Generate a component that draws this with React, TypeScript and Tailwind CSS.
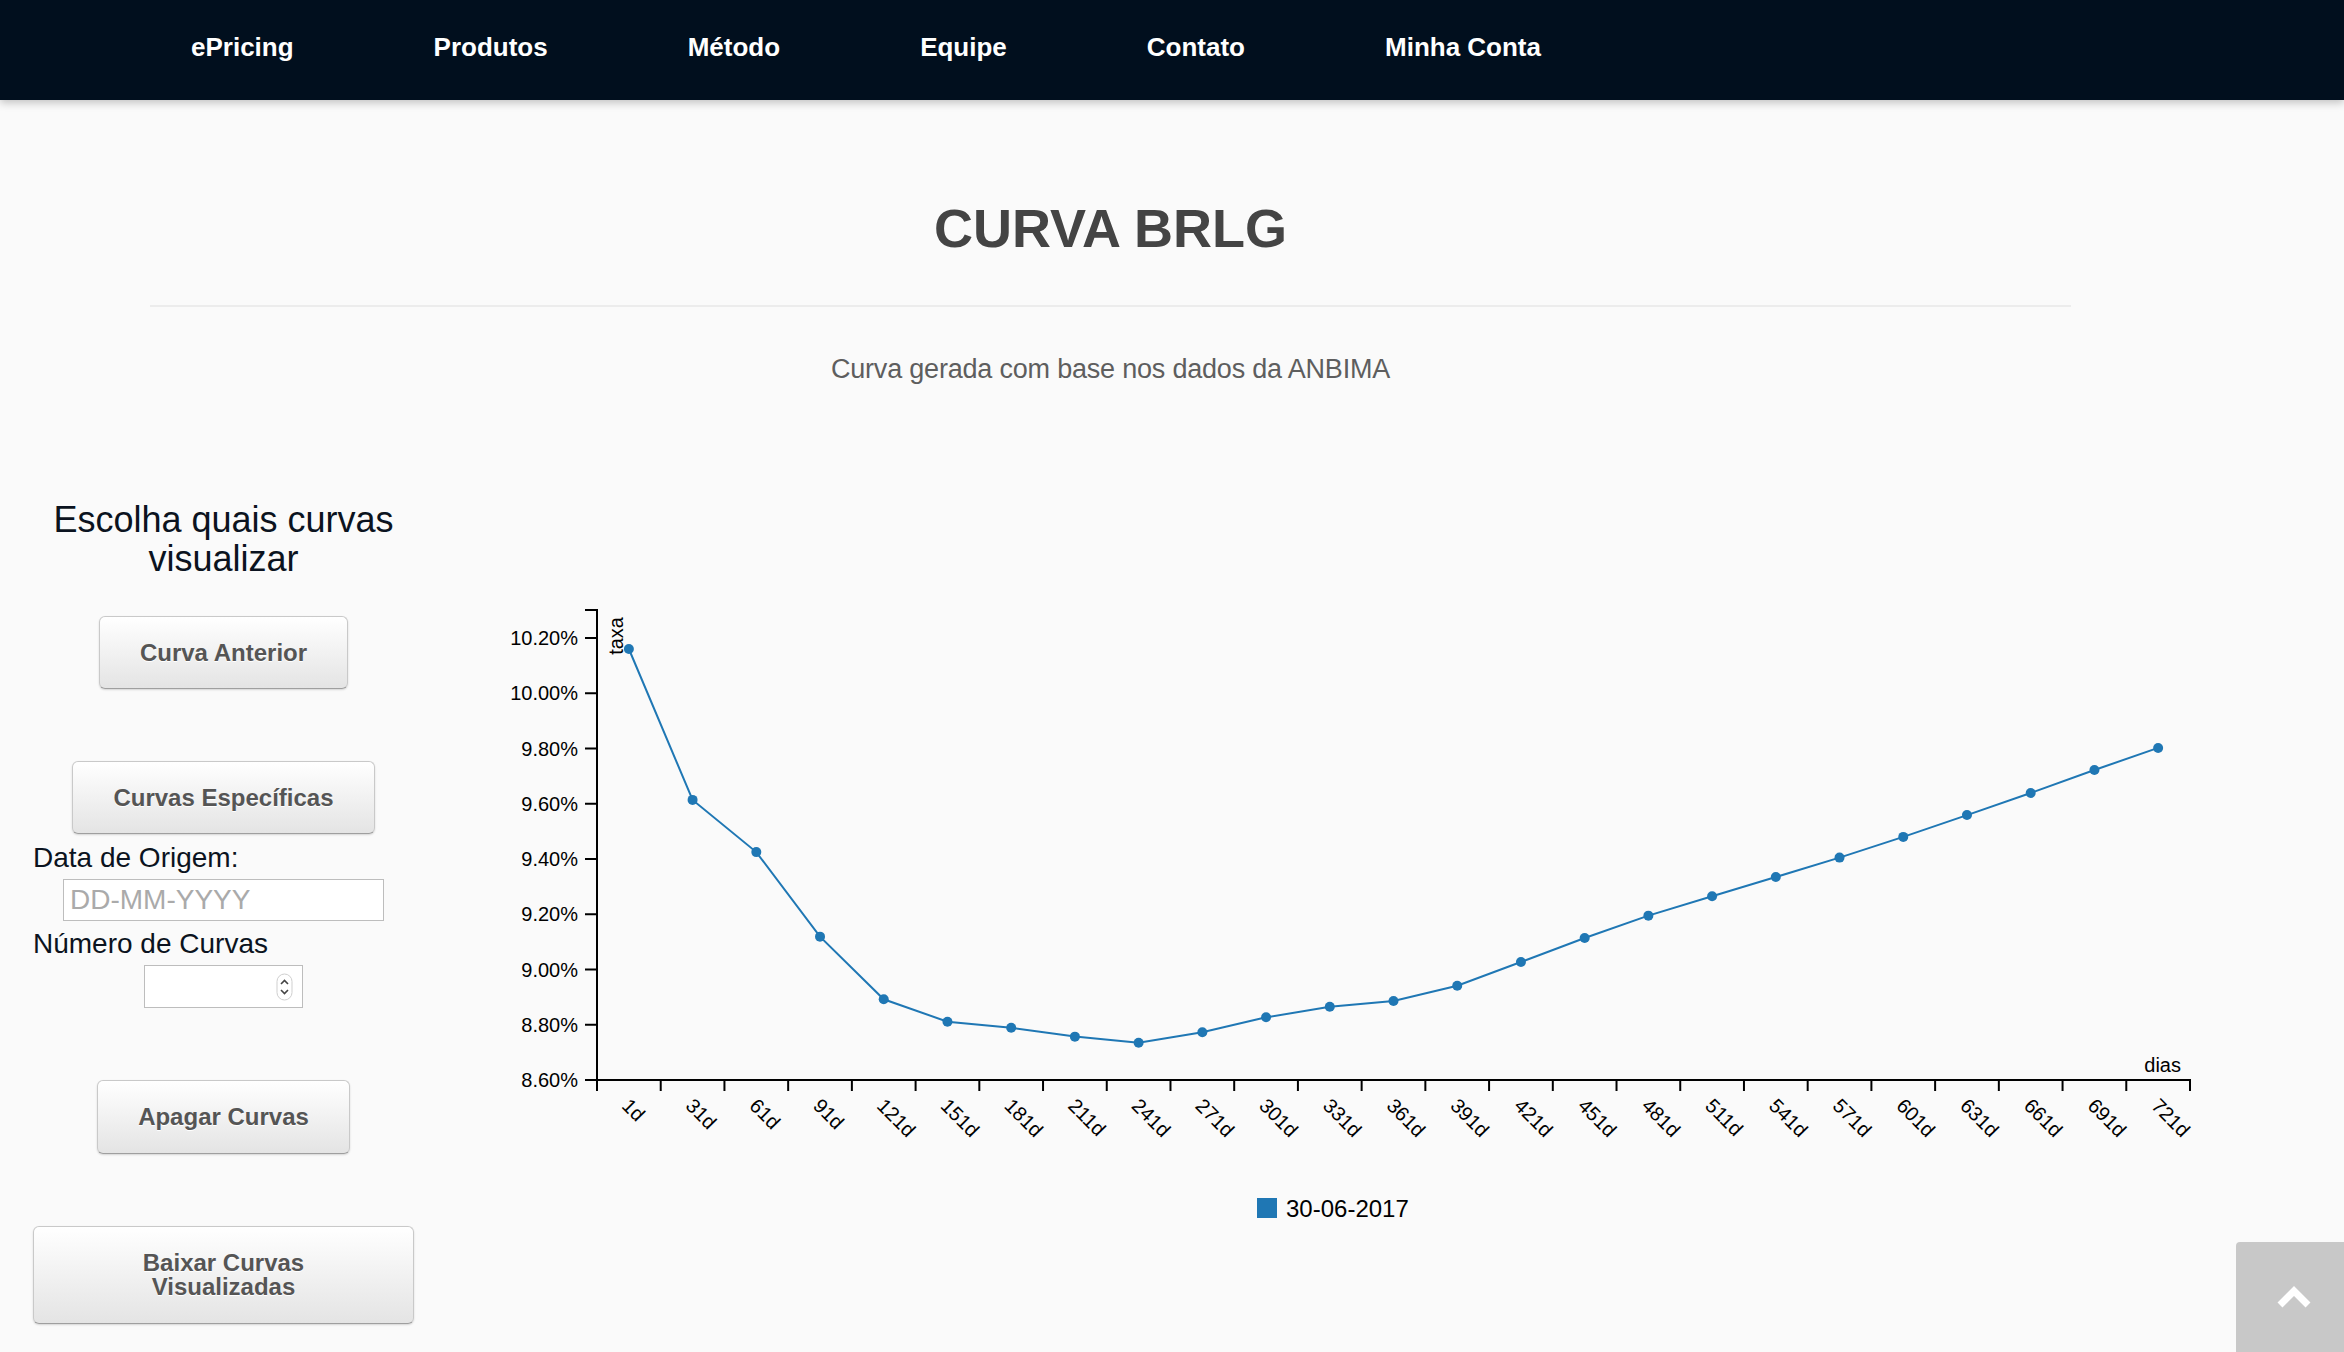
import React from "react";

const navItems = ["ePricing", "Produtos", "Método", "Equipe", "Contato", "Minha Conta"];

// taxa (%) por vencimento, 1d .. 721d
const rates = [
  10.16, 9.614, 9.425, 9.119, 8.892, 8.811, 8.789, 8.757, 8.735, 8.773, 8.827, 8.865, 8.886,
  8.941, 9.027, 9.114, 9.195, 9.265, 9.335, 9.405, 9.48, 9.559, 9.639, 9.722, 9.802,
];

const X0 = 597;
const X1 = 2190;
const Y0 = 1081;
const bw = (X1 - X0) / rates.length;
const yOf = (v: number) => Y0 - (v - 8.6) * 276.25;
const yTicks = [8.6, 8.8, 9.0, 9.2, 9.4, 9.6, 9.8, 10.0, 10.2];

const btn =
  "flex items-center justify-center rounded-[6px] border border-[#c9c9c9] border-b-[#9f9f9f] bg-gradient-to-b from-white to-[#e4e4e4] px-[40px] text-[24px] font-bold leading-[24px] text-[#555] shadow-[0_1px_2px_rgba(0,0,0,0.15)] [text-shadow:0_1px_0_#fff]";

const Chart = () => {
  const pts = rates.map((r, i) => [X0 + (i + 0.5) * bw, yOf(r)]);
  const line = pts.map((p, i) => `${i ? "L" : "M"}${p[0].toFixed(1)},${p[1].toFixed(1)}`).join("");

  return (
    <svg
      viewBox="440 590 1800 680"
      width={1800}
      height={680}
      className="ml-[26px] mt-[89px] shrink-0"
      fontFamily="'Liberation Sans', Arial, sans-serif"
    >
      {/* eixo y */}
      <path d={`M${X0 - 12},611H${X0}V${Y0}H${X0 - 12}`} fill="none" stroke="#000" strokeWidth={2} />
      {yTicks.map((v) => (
        <g key={v}>
          <line x1={X0 - 12} x2={X0} y1={yOf(v)} y2={yOf(v)} stroke="#000" strokeWidth={2} />
          <text x={578} y={yOf(v) + 7} textAnchor="end" fontSize={20} fill="#000">
            {v.toFixed(2)}%
          </text>
        </g>
      ))}
      <text x={623} y={618} textAnchor="end" fontSize={20} transform="rotate(-90 623 618)" fill="#000">
        taxa
      </text>

      {/* eixo x */}
      <path d={`M${X0},${Y0 + 11}V${Y0}H${X1}V${Y0 + 11}`} fill="none" stroke="#000" strokeWidth={2} />
      {rates.map((_, i) =>
        i > 0 ? (
          <line key={i} x1={X0 + i * bw} x2={X0 + i * bw} y1={Y0} y2={Y0 + 11} stroke="#000" strokeWidth={2} />
        ) : null
      )}
      {rates.map((_, i) => {
        const x = X0 + (i + 0.5) * bw - 8;
        return (
          <text key={i} x={x} y={1108} fontSize={20} fill="#000" transform={`rotate(45 ${x} 1108)`}>
            {1 + i * 30}d
          </text>
        );
      })}
      <text x={2181} y={1073} textAnchor="end" fontSize={20} fill="#000">
        dias
      </text>

      {/* curva */}
      <path d={line} fill="none" stroke="#1f77b4" strokeWidth={2} />
      {pts.map((p, i) => (
        <circle key={i} cx={p[0]} cy={p[1]} r={5} fill="#1f77b4" />
      ))}

      {/* legenda */}
      <rect x={1257} y={1199} width={20} height={20} fill="#1f77b4" />
      <text x={1286} y={1218} fontSize={24} fill="#000">
        30-06-2017
      </text>
    </svg>
  );
};

export default function App() {
  return (
    <div className="min-h-screen overflow-hidden bg-[#fafafa] font-['Liberation_Sans',Arial,sans-serif]">
      <nav className="relative z-10 h-[100px] bg-[#010f1e] shadow-[0_3px_8px_rgba(0,0,0,0.22)]">
        <ul className="flex pl-[121px] pt-[33px]">
          {navItems.map((item) => (
            <li key={item} className="px-[70px] text-[26px] font-bold leading-[28px] text-white">
              {item}
            </li>
          ))}
        </ul>
      </nav>

      <div className="ml-[150px] w-[1921px]">
        <h1 className="mt-[101px] text-center text-[54px] font-bold leading-none text-[#444]">CURVA BRLG</h1>
        <div className="mt-[50px] h-[2px] bg-[#ececec]" />
        <p className="mt-[49px] text-center text-[27px] leading-none tracking-[-0.2px] text-[#5e5e5e]">
          Curva gerada com base nos dados da ANBIMA
        </p>
      </div>

      <div className="mt-[117px] flex items-start pl-[33px]">
        <aside className="flex w-[381px] shrink-0 flex-col items-center">
          <h3 className="text-center text-[36px] leading-[39px] text-[#0b1320]">
            Escolha quais curvas
            <br />
            visualizar
          </h3>

          <button className={`${btn} mt-[38px] h-[73px]`}>Curva Anterior</button>
          <button className={`${btn} mt-[72px] h-[73px]`}>Curvas Específicas</button>

          <label className="mt-[8px] self-start text-[28px] leading-[32px] text-[#0b1320]">Data de Origem:</label>
          <input
            placeholder="DD-MM-YYYY"
            className="mt-[5px] h-[42px] w-[321px] border border-[#bdbdbd] bg-white px-[6px] text-[28px] text-[#333] outline-none placeholder:text-[#aaa]"
          />

          <label className="mt-[7px] self-start text-[28px] leading-[32px] text-[#0b1320]">Número de Curvas</label>
          <div className="mt-[5px] flex h-[43px] w-[159px] items-center justify-end border border-[#bdbdbd] bg-white pr-[9px]">
            <svg width="17" height="28" viewBox="0 0 17 28">
              <rect x="1" y="1" width="15" height="26" rx="7.5" fill="#fff" stroke="#cfcfcf" />
              <path d="M5 11 L8.5 7.5 L12 11" fill="none" stroke="#444" strokeWidth="1.6" />
              <path d="M5 17 L8.5 20.5 L12 17" fill="none" stroke="#444" strokeWidth="1.6" />
            </svg>
          </div>

          <button className={`${btn} mt-[72px] h-[74px]`}>Apagar Curvas</button>
          <button className={`${btn} mt-[72px] h-[98px] w-full text-center`}>
            Baixar Curvas
            <br />
            Visualizadas
          </button>
        </aside>

        <Chart />
      </div>

      <button className="fixed bottom-0 right-0 flex h-[110px] w-[108px] items-center justify-center rounded-tl-[4px] bg-[#c8c8c8] pl-[8px]">
        <svg width="36" height="24" viewBox="0 0 36 24">
          <path d="M4 20 L18 6 L32 20" fill="none" stroke="#fff" strokeWidth="7" />
        </svg>
      </button>
    </div>
  );
}
